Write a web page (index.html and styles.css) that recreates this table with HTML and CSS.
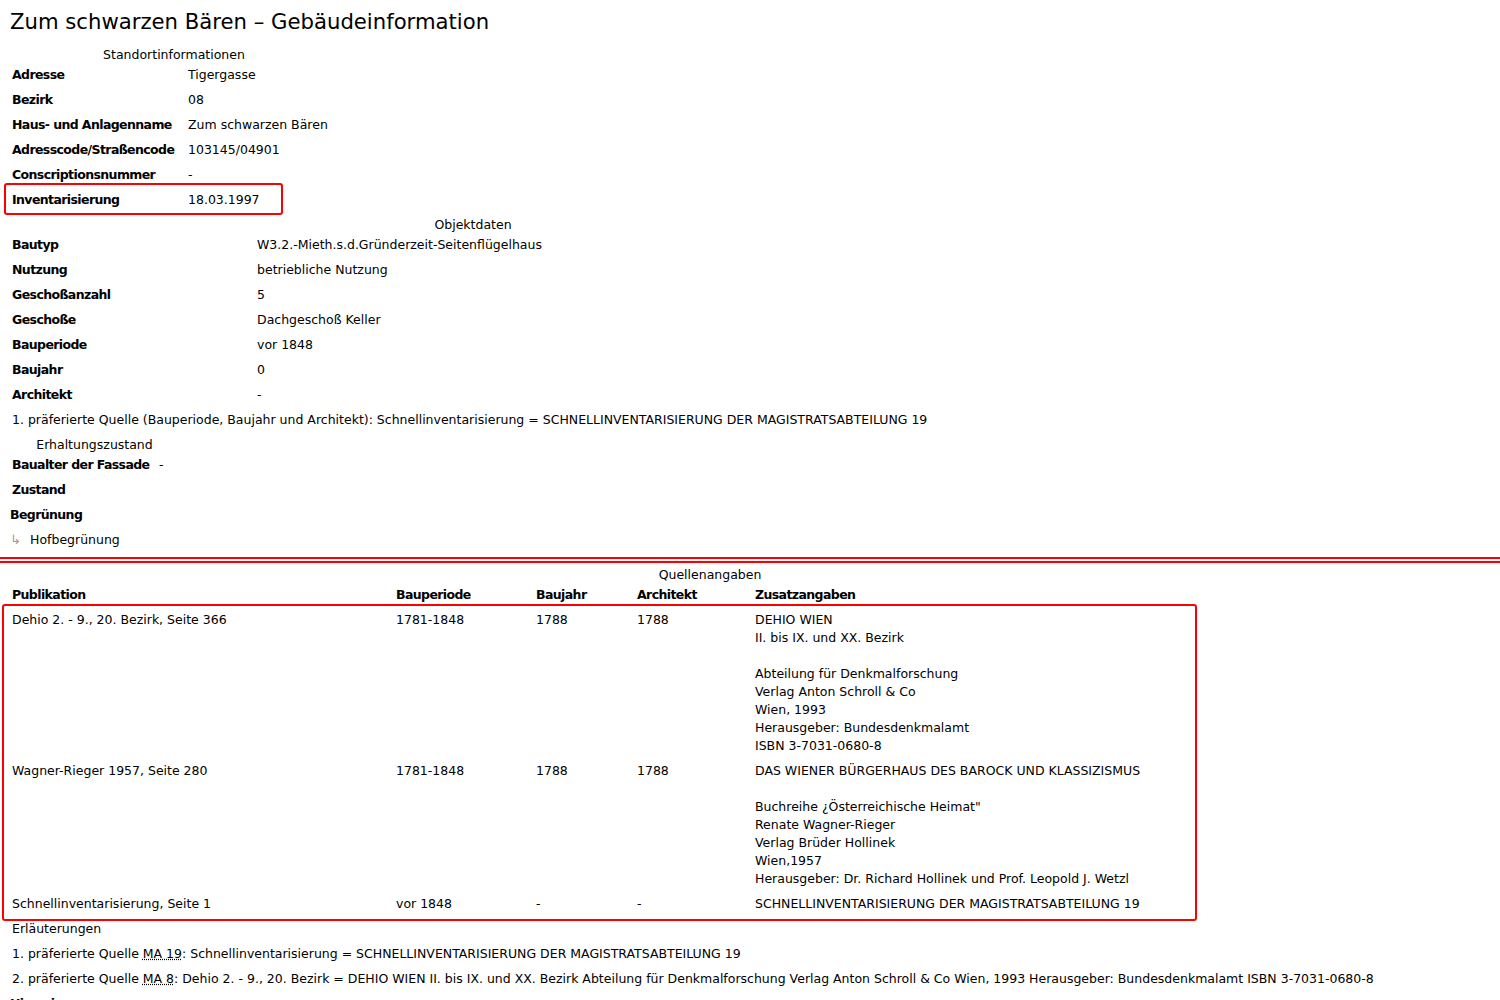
FILE: index.html
```html
<!DOCTYPE html>
<html lang="de">
<head>
<meta charset="utf-8">
<title>Zum schwarzen Bären – Gebäudeinformation</title>
<link rel="stylesheet" href="styles.css">
</head>
<body>
<h1 class="title">Zum schwarzen Bären – Gebäudeinformation</h1>

<section class="tbl tbl-standort">
  <div class="caption">Standortinformationen</div>
  <div class="row"><div class="lbl">Adresse</div><div class="val">Tigergasse</div></div>
  <div class="row"><div class="lbl">Bezirk</div><div class="val">08</div></div>
  <div class="row"><div class="lbl">Haus- und Anlagenname</div><div class="val">Zum schwarzen Bären</div></div>
  <div class="row"><div class="lbl">Adresscode/Straßencode</div><div class="val">103145/04901</div></div>
  <div class="row"><div class="lbl">Conscriptionsnummer</div><div class="val">-</div></div>
  <div class="row marked"><div class="lbl">Inventarisierung</div><div class="val">18.03.1997</div></div>
</section>

<section class="tbl tbl-objekt">
  <div class="caption">Objektdaten</div>
  <div class="row"><div class="lbl">Bautyp</div><div class="val">W3.2.-Mieth.s.d.Gründerzeit-Seitenflügelhaus</div></div>
  <div class="row"><div class="lbl">Nutzung</div><div class="val">betriebliche Nutzung</div></div>
  <div class="row"><div class="lbl">Geschoßanzahl</div><div class="val">5</div></div>
  <div class="row"><div class="lbl">Geschoße</div><div class="val">Dachgeschoß Keller</div></div>
  <div class="row"><div class="lbl">Bauperiode</div><div class="val">vor 1848</div></div>
  <div class="row"><div class="lbl">Baujahr</div><div class="val">0</div></div>
  <div class="row"><div class="lbl">Architekt</div><div class="val">-</div></div>
</section>

<p class="note">1. präferierte Quelle (Bauperiode, Baujahr und Architekt): Schnellinventarisierung = SCHNELLINVENTARISIERUNG DER MAGISTRATSABTEILUNG 19</p>

<section class="tbl tbl-erhalt">
  <div class="caption">Erhaltungszustand</div>
  <div class="row"><div class="lbl">Baualter der Fassade</div><div class="val">-</div></div>
</section>

<div class="line bold pad">Zustand</div>
<div class="line bold sub">Begrünung</div>
<div class="line sub"><span class="arrow">↳</span>Hofbegrünung</div>

<hr class="divider">

<section class="quellen">
  <div class="caption q-caption">Quellenangaben</div>
  <div class="qrow qhead">
    <div>Publikation</div><div>Bauperiode</div><div>Baujahr</div><div>Architekt</div><div>Zusatzangaben</div>
  </div>
  <div class="qbox">
    <div class="qrow">
      <div>Dehio 2. - 9., 20. Bezirk, Seite 366</div><div>1781-1848</div><div>1788</div><div>1788</div>
      <div>DEHIO WIEN<br>II. bis IX. und XX. Bezirk<br><br>Abteilung für Denkmalforschung<br>Verlag Anton Schroll &amp; Co<br>Wien, 1993<br>Herausgeber: Bundesdenkmalamt<br>ISBN 3-7031-0680-8</div>
    </div>
    <div class="qrow">
      <div>Wagner-Rieger 1957, Seite 280</div><div>1781-1848</div><div>1788</div><div>1788</div>
      <div>DAS WIENER BÜRGERHAUS DES BAROCK UND KLASSIZISMUS<br><br>Buchreihe ¿Österreichische Heimat"<br>Renate Wagner-Rieger<br>Verlag Brüder Hollinek<br>Wien,1957<br>Herausgeber: Dr. Richard Hollinek und Prof. Leopold J. Wetzl</div>
    </div>
    <div class="qrow">
      <div>Schnellinventarisierung, Seite 1</div><div>vor 1848</div><div>-</div><div>-</div>
      <div>SCHNELLINVENTARISIERUNG DER MAGISTRATSABTEILUNG 19</div>
    </div>
  </div>
  <div class="caption e-caption">Erläuterungen</div>
  <p class="note">1. präferierte Quelle <abbr title="Magistratsabteilung 19">MA 19</abbr>: Schnellinventarisierung = SCHNELLINVENTARISIERUNG DER MAGISTRATSABTEILUNG 19</p>
  <p class="note">2. präferierte Quelle <abbr title="Magistratsabteilung 8">MA 8</abbr>: Dehio 2. - 9., 20. Bezirk = DEHIO WIEN II. bis IX. und XX. Bezirk Abteilung für Denkmalforschung Verlag Anton Schroll &amp; Co Wien, 1993 Herausgeber: Bundesdenkmalamt ISBN 3-7031-0680-8</p>
  <div class="line bold more">Hinweise</div>
</section>
</body>
</html>
```

FILE: styles.css
```css
html, body {
  margin: 0;
  padding: 0;
  background: #fff;
}
body {
  font-family: "DejaVu Sans", Verdana, sans-serif;
  font-size: 12.5px;
  color: #000;
  padding: 0 8px;
  overflow: hidden;
  height: 1000px;
}
.title {
  font-family: "DejaVu Sans", Verdana, sans-serif;
  font-weight: normal;
  font-size: 21.2px;
  line-height: 28px;
  margin: 8px 0 0 2px;
}
.caption {
  line-height: 15px;
  height: 15px;
  text-align: center;
}
.tbl {
  display: grid;
}
.tbl-standort { width: 332px; margin-top: 10.5px; }
.tbl-objekt { width: 930px; margin-top: 5px; }
.tbl-erhalt { width: 173px; margin-top: 5px; }
.row {
  display: grid;
  height: 25px;
  align-items: center;
  position: relative;
}
.tbl-standort .row { grid-template-columns: 176px 1fr; }
.tbl-objekt .row { grid-template-columns: 245px 1fr; }
.tbl-erhalt .row { grid-template-columns: 147px 1fr; }
.lbl {
  font-weight: bold;
  letter-spacing: -0.6px;
  padding-left: 4px;
  white-space: nowrap;
}
.val {
  padding-left: 4px;
  white-space: nowrap;
}
.marked::after {
  content: "";
  position: absolute;
  left: -4px;
  top: -4px;
  width: 275px;
  height: 28px;
  border: 2px solid #f00;
  border-radius: 3px;
  pointer-events: none;
}
.note {
  margin: 0;
  height: 25px;
  line-height: 25px;
  padding-left: 4px;
  white-space: nowrap;
}
.line {
  height: 25px;
  line-height: 25px;
  white-space: nowrap;
}
.bold { font-weight: bold; letter-spacing: -0.6px; }
.pad { padding-left: 4px; }
.sub { padding-left: 2px; }
.arrow {
  color: #999;
  display: inline-block;
  width: 20px;
  font-size: 13px;
  letter-spacing: 0;
}
.divider {
  border: 0;
  border-top: 6px double #f00;
  height: 0;
  margin: 5.5px -8px 0;
}
.q-caption {
  width: 1404px;
  margin-top: 4px;
  height: 16px;
  line-height: 16px;
}
.qrow {
  display: grid;
  grid-template-columns: 384px 140px 101px 118px 1fr;
}
.qrow > div {
  padding-left: 4px;
  white-space: nowrap;
}
.qhead {
  height: 21px;
  line-height: 23px;
  font-weight: bold;
  letter-spacing: -0.6px;
}
.qbox {
  width: 1187px;
  margin-left: -6px;
  padding: 0 0 4px 4px;
  border: 2px solid #f00;
  border-radius: 3px;
}
.qbox .qrow {
  line-height: 18px;
  padding: 5px 0 2px;
}
.e-caption {
  text-align: left;
  padding-left: 4px;
  margin-top: -0.5px;
  margin-bottom: 5px;
}
.more {
  padding-left: 2px;
}
```
